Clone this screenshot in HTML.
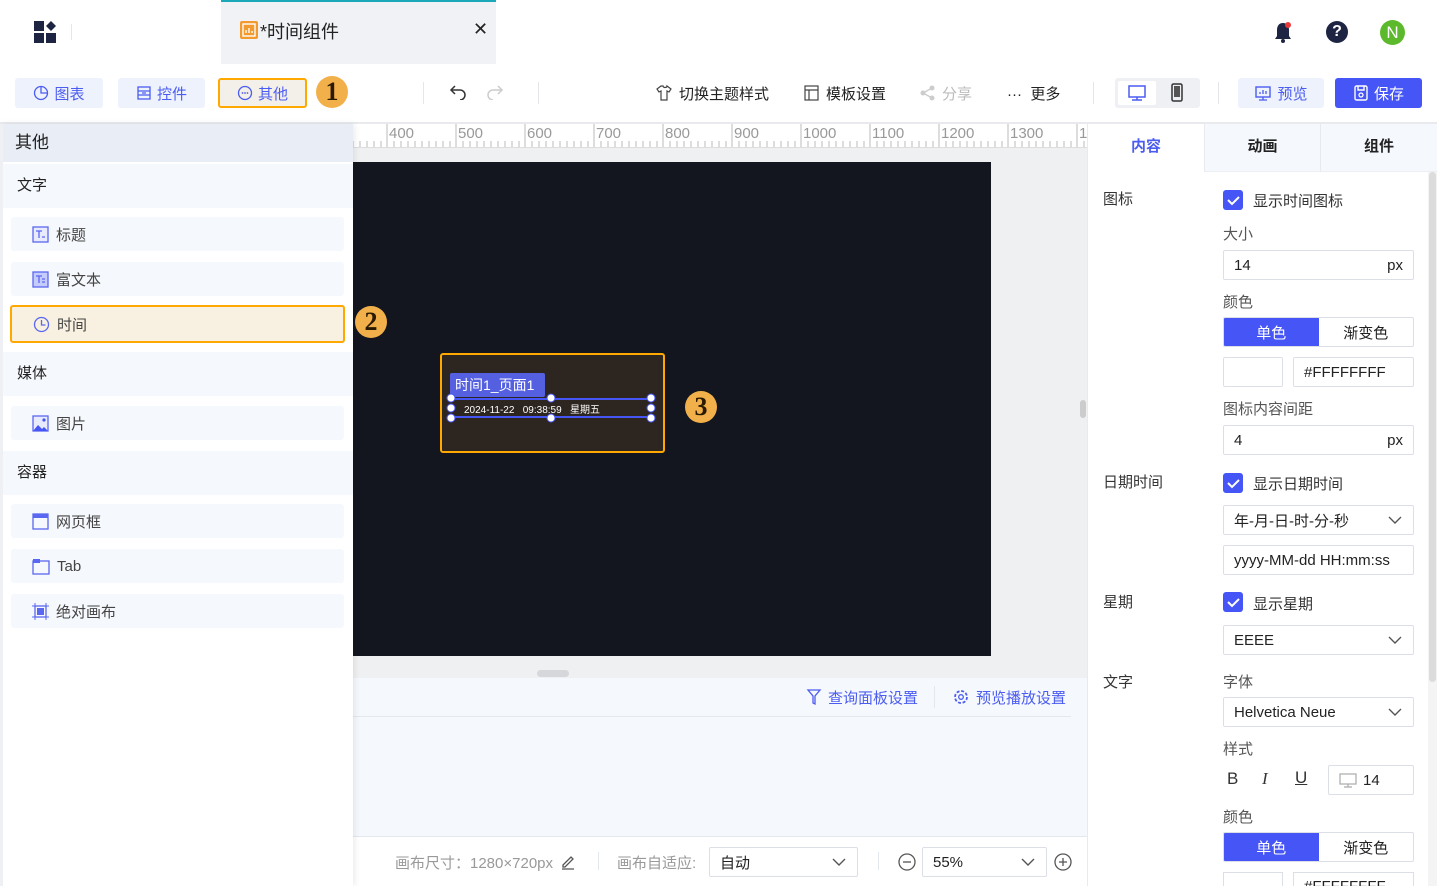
<!DOCTYPE html>
<html style="width:1437px;height:886px;overflow:hidden"><head><meta charset="utf-8"><style>
*{box-sizing:border-box;margin:0;padding:0}
body{width:1437px;height:886px;overflow:hidden;background:#fff;font-family:"Liberation Sans","Noto Sans CJK SC",sans-serif;font-size:15px;color:#222;position:relative}
.a{position:absolute}
.btn{position:absolute;height:30px;border-radius:3px;display:flex;align-items:center;justify-content:center;font-size:15px;color:#4b5cf0;background:#eef2fd;gap:5px}
.badge{position:absolute;width:32px;height:32px;border-radius:50%;background:#f2b04b;color:#2a1a00;font-family:"Liberation Serif",serif;font-weight:bold;font-size:26px;display:flex;align-items:center;justify-content:center}
.sec{position:absolute;left:3px;width:350px;height:44px;background:#f5f8fc;padding-left:14px;line-height:44px;font-size:15px;color:#222}
.item{position:absolute;left:11px;width:333px;height:34px;background:#f5f8fc;border-radius:3px;display:flex;align-items:center;padding-left:21px;gap:7px;font-size:15px;color:#444}
.lbl{position:absolute;font-size:15px;color:#333}
.sub{position:absolute;left:1223px;font-size:15px;color:#555}
.inp{position:absolute;left:1223px;width:191px;height:30px;border:1px solid #dcdfe6;border-radius:2px;display:flex;align-items:center;padding:0 10px;font-size:15px;color:#222;justify-content:space-between;background:#fff}
.chk{position:absolute;left:1223px;width:20px;height:20px;border-radius:3px;background:#4655f5}
.seg{position:absolute;left:1223px;width:191px;height:30px;display:flex;border:1px solid #dcdfe6;border-radius:2px;overflow:hidden}
.seg div{flex:1;display:flex;align-items:center;justify-content:center;font-size:15px}
.seg div:first-child{background:#4655f5;color:#fff}
</style></head><body>
<!-- top bar -->
<svg class="a" style="left:34px;top:21px" width="24" height="22"><rect x="0" y="0" width="10" height="10" fill="#1d2542"/><rect x="0" y="12" width="10" height="10" fill="#1d2542"/><rect x="12" y="12" width="10" height="10" fill="#1d2542"/><path d="M17 0 L22 5 L17 10 L12 5Z" fill="#1d2542"/></svg>
<div class="a" style="left:71px;top:24px;width:1px;height:16px;background:#e4e6ea"></div>
<div class="a" style="left:221px;top:0;width:275px;height:64px;background:#f1f2f5;border-top:2px solid #1ba8b8"></div>
<div class="a" style="left:240px;top:21px;width:18px;height:18px;background:#f29a2e;border-radius:2px"><svg width="18" height="18"><rect x="3" y="3" width="12" height="12" fill="none" stroke="#fff" stroke-width="1.4"/><path d="M6 12V9M9 12V7M12 12V10" stroke="#fff" stroke-width="1.4"/></svg></div>
<div class="a" style="left:260px;top:18px;font-size:18px;color:#222">*时间组件</div>
<div class="a" style="left:473px;top:19px;font-size:18px;color:#222">✕</div>
<svg class="a" style="left:1272px;top:20px" width="22" height="24"><path d="M11 3c-4 0-6 3-6 7v6l-2 3h16l-2-3v-6c0-4-2-7-6-7z" fill="#1d2542"/><circle cx="11" cy="21" r="2" fill="#1d2542"/><circle cx="16" cy="5" r="3" fill="#e83a3a"/></svg>
<div class="a" style="left:1326px;top:21px;width:22px;height:22px;border-radius:50%;background:#1d2542;color:#fff;font-weight:bold;font-size:16px;text-align:center;line-height:22px">?</div>
<div class="a" style="left:1380px;top:20px;width:25px;height:25px;border-radius:50%;background:#5db92c;color:#fff;font-size:17px;text-align:center;line-height:25px">N</div>
<!-- toolbar -->
<div class="btn" style="left:15px;top:78px;width:88px"><svg width="16" height="16"><circle cx="8" cy="8" r="6.5" fill="none" stroke="#4b5cf0" stroke-width="1.3"/><path d="M8 1.5V8h6.5" fill="none" stroke="#4b5cf0" stroke-width="1.3"/></svg>图表</div>
<div class="btn" style="left:118px;top:78px;width:87px"><svg width="16" height="16"><rect x="2" y="2" width="12" height="12" fill="none" stroke="#4b5cf0" stroke-width="1.3"/><path d="M2 6h12M2 10h12M6 8h4" stroke="#4b5cf0" stroke-width="1.3"/></svg>控件</div>
<div class="btn" style="left:218px;top:78px;width:89px;background:#f3efe9;border:2px solid #ffa800"><svg width="16" height="16"><circle cx="8" cy="8" r="6.5" fill="none" stroke="#4b5cf0" stroke-width="1.3"/><circle cx="5.5" cy="8" r=".9" fill="#4b5cf0"/><circle cx="8" cy="8" r=".9" fill="#4b5cf0"/><circle cx="10.5" cy="8" r=".9" fill="#4b5cf0"/></svg>其他</div>
<div class="badge" style="left:316px;top:76px">1</div>
<div class="a" style="left:423px;top:82px;width:1px;height:22px;background:#e4e6ea"></div>
<svg class="a" style="left:447px;top:84px" width="20" height="16"><path d="M4 6h9a5 5 0 0 1 0 10" fill="none" stroke="#333" stroke-width="1.5"/><path d="M8 2L4 6l4 4" fill="none" stroke="#333" stroke-width="1.5"/></svg>
<svg class="a" style="left:486px;top:84px" width="20" height="16"><path d="M16 6H7a5 5 0 0 0 0 10" fill="none" stroke="#ccc" stroke-width="1.5"/><path d="M12 2l4 4-4 4" fill="none" stroke="#ccc" stroke-width="1.5"/></svg>
<div class="a" style="left:538px;top:82px;width:1px;height:22px;background:#e4e6ea"></div>
<div class="a" style="left:655px;top:84px;width:18px;height:18px;background:#fff"><svg width="18" height="18"><path d="M6 2L2 5l2 3 2-1v9h6V7l2 1 2-3-4-3c0 2-4 2-4 0z" fill="none" stroke="#444" stroke-width="1.2"/></svg></div>
<div class="a" style="left:679px;top:83px;color:#222">切换主题样式</div>
<svg class="a" style="left:803px;top:84px" width="18" height="18"><rect x="2" y="2" width="13" height="14" fill="none" stroke="#444" stroke-width="1.2"/><path d="M2 6h13M6 6v10" stroke="#444" stroke-width="1.2"/></svg>
<div class="a" style="left:826px;top:83px;color:#222">模板设置</div>
<svg class="a" style="left:919px;top:84px" width="18" height="18"><circle cx="13" cy="4" r="2.5" fill="#ccc"/><circle cx="4" cy="9" r="2.5" fill="#ccc"/><circle cx="13" cy="14" r="2.5" fill="#ccc"/><path d="M13 4L4 9l9 5" stroke="#ccc" stroke-width="1.3" fill="none"/></svg>
<div class="a" style="left:942px;top:83px;color:#bbb">分享</div>
<div class="a" style="left:1007px;top:83px;color:#222">···&nbsp; 更多</div>
<div class="a" style="left:1093px;top:82px;width:1px;height:22px;background:#e4e6ea"></div>
<div class="a" style="left:1115px;top:78px;width:85px;height:30px;background:#eff0f3;border-radius:3px"></div>
<div class="a" style="left:1118px;top:81px;width:38px;height:24px;background:#fff;border-radius:2px"><svg width="38" height="24"><rect x="11" y="5" width="16" height="11" fill="none" stroke="#4b5cf0" stroke-width="1.5"/><path d="M19 16v3M14 19h10" stroke="#4b5cf0" stroke-width="1.5"/></svg></div>
<svg class="a" style="left:1168px;top:83px" width="18" height="20"><rect x="4" y="1" width="10" height="17" rx="1.5" fill="none" stroke="#333" stroke-width="1.5"/><rect x="6" y="3" width="6" height="11" fill="#555"/></svg>
<div class="a" style="left:1218px;top:82px;width:1px;height:22px;background:#e4e6ea"></div>
<div class="btn" style="left:1238px;top:78px;width:86px"><svg width="18" height="16"><rect x="2" y="2" width="14" height="10" fill="none" stroke="#4b5cf0" stroke-width="1.4"/><path d="M9 12v3M5 15h8M6 9V7M9 9V5M12 9V6" stroke="#4b5cf0" stroke-width="1.3"/></svg>预览</div>
<div class="btn" style="left:1335px;top:78px;width:87px;background:#4655f5;color:#fff"><svg width="16" height="18"><rect x="2" y="2" width="12" height="14" rx="1.5" fill="none" stroke="#fff" stroke-width="1.4"/><path d="M5 2v4h6V2" fill="none" stroke="#fff" stroke-width="1.4"/><circle cx="8" cy="11" r="2" fill="none" stroke="#fff" stroke-width="1.3"/></svg>保存</div>
<div class="a" style="left:0;top:122px;width:1437px;height:2px;background:#e8eaee"></div>
<!-- ruler -->
<div class="a" style="left:353px;top:124px;width:734px;height:24px;background:#fff;overflow:hidden;border-bottom:1px solid #ddd">
<svg width="734" height="24" style="position:absolute;left:0;top:0">
<g stroke="#bbb" stroke-width="1">
<path d="M34 0V24M103 0V24M172 0V24M241 0V24M310 0V24M379 0V24M448 0V24M517 0V24M586 0V24M655 0V24M724 0V24"/>
<path d="M0 17V24M7 17V24M14 17V24M21 17V24M28 17V24M41 17V24M48 17V24M55 17V24M62 17V24M69 17V24M76 17V24M83 17V24M90 17V24M97 17V24M110 17V24M117 17V24M124 17V24M131 17V24M138 17V24M145 17V24M152 17V24M159 17V24M166 17V24M179 17V24M186 17V24M193 17V24M200 17V24M207 17V24M214 17V24M221 17V24M228 17V24M235 17V24M248 17V24M255 17V24M262 17V24M269 17V24M276 17V24M283 17V24M290 17V24M297 17V24M304 17V24M317 17V24M324 17V24M331 17V24M338 17V24M345 17V24M352 17V24M359 17V24M366 17V24M373 17V24M386 17V24M393 17V24M400 17V24M407 17V24M414 17V24M421 17V24M428 17V24M435 17V24M442 17V24M455 17V24M462 17V24M469 17V24M476 17V24M483 17V24M490 17V24M497 17V24M504 17V24M511 17V24M524 17V24M531 17V24M538 17V24M545 17V24M552 17V24M559 17V24M566 17V24M573 17V24M580 17V24M593 17V24M600 17V24M607 17V24M614 17V24M621 17V24M628 17V24M635 17V24M642 17V24M649 17V24M662 17V24M669 17V24M676 17V24M683 17V24M690 17V24M697 17V24M704 17V24M711 17V24M718 17V24M731 17V24"/></g>
<g font-size="15" fill="#999" font-family="Liberation Sans"><text x="36" y="14">400</text><text x="105" y="14">500</text><text x="174" y="14">600</text><text x="243" y="14">700</text><text x="312" y="14">800</text><text x="381" y="14">900</text><text x="450" y="14">1000</text><text x="519" y="14">1100</text><text x="588" y="14">1200</text><text x="657" y="14">1300</text><text x="726" y="14">1</text></g></svg></div>
<!-- canvas area -->
<div class="a" style="left:353px;top:148px;width:734px;height:530px;background:#eff0f2"></div>
<div class="a" style="left:353px;top:162px;width:638px;height:494px;background:#13161f"></div>
<div class="a" style="left:537px;top:670px;width:32px;height:7px;border-radius:4px;background:#d6d7da"></div>
<div class="a" style="left:1080px;top:400px;width:6px;height:18px;border-radius:3px;background:#ccc"></div>
<div class="a" style="left:440px;top:353px;width:225px;height:100px;border:2.5px solid #ffa800;border-radius:3px;background:#2d2520"></div>
<div class="a" style="left:450px;top:373px;width:95px;height:24px;background:#5460e0;border-radius:2px;color:#fff;font-size:14px;line-height:24px;padding-left:5px">时间1_页面1</div>
<div class="a" style="left:451px;top:398px;width:200px;height:20px;border-top:2px solid #4655f5;border-bottom:2px solid #4655f5"></div>
<div class="a" style="left:464px;top:401px;color:#fff;font-size:10px">2024-11-22 &nbsp; 09:38:59 &nbsp; 星期五</div>
<svg class="a" style="left:444px;top:392px" width="214" height="32"><g fill="#fff" stroke="#4655f5" stroke-width="1"><circle cx="7" cy="6" r="4"/><circle cx="107" cy="6" r="4"/><circle cx="207" cy="6" r="4"/><circle cx="7" cy="16" r="4"/><circle cx="207" cy="16" r="4"/><circle cx="7" cy="26" r="4"/><circle cx="107" cy="26" r="4"/><circle cx="207" cy="26" r="4"/></g></svg>
<div class="badge" style="left:685px;top:391px">3</div>
<!-- bottom panel -->
<div class="a" style="left:353px;top:678px;width:734px;height:158px;background:#f5f8fc"></div>
<div class="a" style="left:353px;top:716px;width:718px;height:1px;background:#e3e7ee"></div>
<svg class="a" style="left:806px;top:688px" width="16" height="18"><path d="M2 2h12l-5 6v8l-2-1V8z" fill="none" stroke="#4b5cf0" stroke-width="1.3"/></svg>
<div class="a" style="left:828px;top:687px;color:#4b5cf0">查询面板设置</div>
<div class="a" style="left:934px;top:686px;width:1px;height:22px;background:#e3e7ee"></div>
<svg class="a" style="left:952px;top:688px" width="18" height="18"><circle cx="9" cy="9" r="6" fill="none" stroke="#4b5cf0" stroke-width="1.8" stroke-dasharray="3 1.7"/><circle cx="9" cy="9" r="2.3" fill="none" stroke="#4b5cf0" stroke-width="1.3"/></svg>
<div class="a" style="left:976px;top:687px;color:#4b5cf0">预览播放设置</div>
<div class="a" style="left:353px;top:836px;width:734px;height:50px;background:#fff;border-top:1px solid #e3e7ee"></div>
<div class="a" style="left:395px;top:852px;color:#999">画布尺寸：1280×720px</div>
<svg class="a" style="left:559px;top:852px" width="18" height="18"><path d="M4 13l8-8 2 2-8 8H4z M3 17h12" fill="none" stroke="#555" stroke-width="1.3"/></svg>
<div class="a" style="left:598px;top:852px;width:1px;height:18px;background:#e3e7ee"></div>
<div class="a" style="left:617px;top:852px;color:#999">画布自适应:</div>
<div class="inp" style="left:709px;top:847px;width:149px;height:30px"><span>自动</span><svg width="16" height="10"><path d="M2 2l6 6 6-6" fill="none" stroke="#555" stroke-width="1.4"/></svg></div>
<div class="a" style="left:878px;top:852px;width:1px;height:18px;background:#e3e7ee"></div>
<svg class="a" style="left:897px;top:852px" width="20" height="20"><circle cx="10" cy="10" r="8" fill="none" stroke="#555" stroke-width="1.3"/><path d="M6 10h8" stroke="#555" stroke-width="1.3"/></svg>
<div class="inp" style="left:922px;top:847px;width:125px;height:30px"><span>55%</span><svg width="16" height="10"><path d="M2 2l6 6 6-6" fill="none" stroke="#555" stroke-width="1.4"/></svg></div>
<svg class="a" style="left:1053px;top:852px" width="20" height="20"><circle cx="10" cy="10" r="8" fill="none" stroke="#555" stroke-width="1.3"/><path d="M6 10h8M10 6v8" stroke="#555" stroke-width="1.3"/></svg>
<!-- left panel -->
<div class="a" style="left:0;top:124px;width:353px;height:762px;background:#fff;box-shadow:2px 0 6px rgba(0,0,0,.08);border-left:3px solid #eef0f3"></div>
<div class="a" style="left:3px;top:124px;width:350px;height:38px;background:#e9eef6;font-size:17px;line-height:38px;padding-left:12px;color:#222">其他</div>
<div class="sec" style="top:164px">文字</div>
<div class="item" style="top:217px"><svg width="17" height="17"><rect x="1" y="1" width="15" height="15" fill="#e8ebfd" stroke="#5a67f0" stroke-width="1.3"/><path d="M4 5h6M7 5v7M10 11h3" stroke="#5a67f0" stroke-width="1.3"/></svg>标题</div>
<div class="item" style="top:262px"><svg width="17" height="17"><rect x="1" y="1" width="15" height="15" fill="#c5cbfa" stroke="#5a67f0" stroke-width="1.3"/><path d="M4 5h6M7 5v7M10 8h3M10 11h3" stroke="#5a67f0" stroke-width="1.3"/></svg>富文本</div>
<div class="item" style="top:305px;height:38px;left:10px;width:335px;background:#f8f0e0;border:2.5px solid #ffa800"><svg width="17" height="17"><circle cx="8.5" cy="8.5" r="7" fill="none" stroke="#5a67f0" stroke-width="1.3"/><path d="M8.5 4v5h4" fill="none" stroke="#5a67f0" stroke-width="1.3"/></svg>时间</div>
<div class="badge" style="left:355px;top:306px">2</div>
<div class="sec" style="top:352px">媒体</div>
<div class="item" style="top:406px"><svg width="17" height="17"><rect x="1" y="1" width="15" height="15" fill="#e8ebfd" stroke="#5a67f0" stroke-width="1.3"/><path d="M1 16l5-6 4 4 2-2 4 4z" fill="#4655f5"/><circle cx="12" cy="5" r="1.6" fill="#4655f5"/></svg>图片</div>
<div class="sec" style="top:451px">容器</div>
<div class="item" style="top:504px"><svg width="17" height="17"><rect x="1" y="1" width="15" height="15" fill="none" stroke="#5a67f0" stroke-width="1.3"/><rect x="1" y="1" width="15" height="4" fill="#5a67f0"/></svg>网页框</div>
<div class="item" style="top:549px"><svg width="18" height="17"><rect x="1" y="3" width="16" height="13" fill="none" stroke="#5a67f0" stroke-width="1.3"/><rect x="1" y="1" width="7" height="4" fill="#5a67f0"/></svg>Tab</div>
<div class="item" style="top:594px"><svg width="17" height="17"><rect x="3" y="3" width="11" height="11" fill="none" stroke="#5a67f0" stroke-width="1.3"/><rect x="5" y="5" width="7" height="7" fill="#5a67f0"/><path d="M0 3h3M0 14h3M14 3h3M14 14h3M3 0v3M14 0v3M3 14v3M14 14v3" stroke="#5a67f0"/></svg>绝对画布</div>
<!-- right panel -->
<div class="a" style="left:1087px;top:124px;width:1px;height:762px;background:#e8eaee"></div>
<div class="a" style="left:1088px;top:124px;width:349px;height:48px;background:#f5f8fc;border-bottom:1px solid #eceef2"></div>
<div class="a" style="left:1088px;top:124px;width:116px;height:48px;background:#fff;color:#4b5cf0;font-weight:bold;text-align:center;line-height:46px">内容</div>
<div class="a" style="left:1204px;top:124px;width:1px;height:48px;background:#e8eaee"></div>
<div class="a" style="left:1205px;top:124px;width:115px;line-height:46px;text-align:center;font-weight:bold">动画</div>
<div class="a" style="left:1320px;top:124px;width:1px;height:48px;background:#e8eaee"></div>
<div class="a" style="left:1321px;top:124px;width:116px;line-height:46px;text-align:center;font-weight:bold">组件</div>
<div class="a" style="left:1428px;top:172px;width:9px;height:714px;background:#f4f4f4"></div>
<div class="a" style="left:1429px;top:172px;width:7px;height:510px;border-radius:4px;background:#dcdcdc"></div>

<div class="lbl" style="left:1103px;top:188px">图标</div>
<div class="chk" style="top:190px"><svg width="20" height="20"><path d="M5 10l4 4 7-7" fill="none" stroke="#fff" stroke-width="2"/></svg></div>
<div class="lbl" style="left:1253px;top:190px">显示时间图标</div>
<div class="sub" style="top:223px">大小</div>
<div class="inp" style="top:250px"><span>14</span><span>px</span></div>
<div class="sub" style="top:291px">颜色</div>
<div class="seg" style="top:317px"><div>单色</div><div>渐变色</div></div>
<div class="inp" style="top:357px;width:60px"></div>
<div class="inp" style="top:357px;left:1293px;width:121px">#FFFFFFFF</div>
<div class="sub" style="top:398px">图标内容间距</div>
<div class="inp" style="top:425px"><span>4</span><span>px</span></div>

<div class="lbl" style="left:1103px;top:471px">日期时间</div>
<div class="chk" style="top:473px"><svg width="20" height="20"><path d="M5 10l4 4 7-7" fill="none" stroke="#fff" stroke-width="2"/></svg></div>
<div class="lbl" style="left:1253px;top:473px">显示日期时间</div>
<div class="inp" style="top:505px"><span>年-月-日-时-分-秒</span><svg width="16" height="10"><path d="M2 2l6 6 6-6" fill="none" stroke="#555" stroke-width="1.4"/></svg></div>
<div class="inp" style="top:545px"><span>yyyy-MM-dd HH:mm:ss</span></div>

<div class="lbl" style="left:1103px;top:591px">星期</div>
<div class="chk" style="top:592px"><svg width="20" height="20"><path d="M5 10l4 4 7-7" fill="none" stroke="#fff" stroke-width="2"/></svg></div>
<div class="lbl" style="left:1253px;top:593px">显示星期</div>
<div class="inp" style="top:625px"><span>EEEE</span><svg width="16" height="10"><path d="M2 2l6 6 6-6" fill="none" stroke="#555" stroke-width="1.4"/></svg></div>

<div class="lbl" style="left:1103px;top:671px">文字</div>
<div class="sub" style="top:671px">字体</div>
<div class="inp" style="top:697px"><span>Helvetica Neue</span><svg width="16" height="10"><path d="M2 2l6 6 6-6" fill="none" stroke="#555" stroke-width="1.4"/></svg></div>
<div class="sub" style="top:738px">样式</div>
<div class="a" style="left:1227px;top:769px;font-size:17px;color:#333">B</div>
<div class="a" style="left:1262px;top:769px;font-size:17px;color:#333;font-family:'Liberation Serif',serif;font-style:italic">I</div>
<div class="a" style="left:1295px;top:768px;font-size:17px;color:#333;text-decoration:underline">U</div>
<div class="inp" style="top:765px;left:1328px;width:86px;justify-content:flex-start;gap:6px"><svg width="18" height="16"><rect x="1" y="2" width="16" height="10" fill="none" stroke="#aaa" stroke-width="1.2"/><path d="M9 12v3M5 15h8" stroke="#aaa" stroke-width="1.2"/></svg>14</div>
<div class="sub" style="top:806px">颜色</div>
<div class="seg" style="top:832px"><div>单色</div><div>渐变色</div></div>
<div class="a" style="left:1223px;top:872px;width:60px;height:14px;border:1px solid #dcdfe6;border-bottom:none"></div>
<div class="a" style="left:1293px;top:872px;width:121px;height:14px;border:1px solid #dcdfe6;border-bottom:none;overflow:hidden;padding-left:10px;padding-top:5px;font-size:15px;line-height:17px">#FFFFFFFF</div>
</body></html>
